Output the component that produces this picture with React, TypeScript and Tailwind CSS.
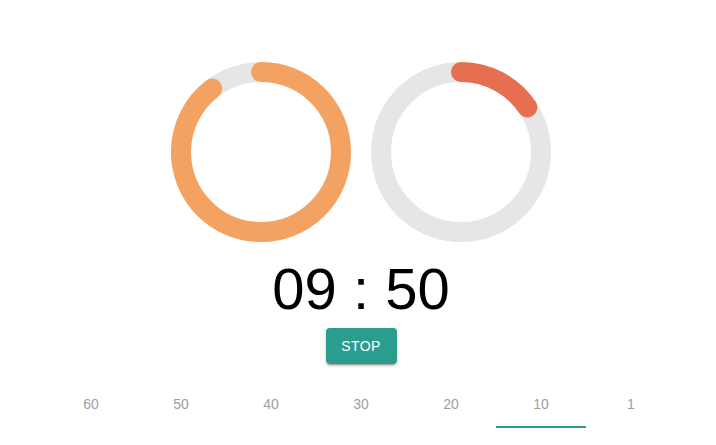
const R = 80;
const C = 2 * Math.PI * R;

const Ring = ({ degrees, color }: { degrees: number; color: string }) => {
  const len = (degrees / 360) * C;
  return (
    <svg width="180" height="180" viewBox="0 0 180 180" className="block">
      <circle cx="90" cy="90" r={R} fill="none" stroke="#e6e6e6" strokeWidth="20" />
      <circle
        cx="90"
        cy="90"
        r={R}
        fill="none"
        stroke={color}
        strokeWidth="20"
        strokeLinecap="round"
        strokeDasharray={`${len} ${C}`}
        transform="rotate(-90 90 90)"
      />
    </svg>
  );
};

const tabs = ["60", "50", "40", "30", "20", "10", "1"];

const App = () => {
  return (
    <div className="min-h-[445px] w-full bg-white pl-[6px] font-['Liberation_Sans',Arial,sans-serif]">
      <div className="flex flex-col items-center pt-[62px]">
        <div className="flex gap-[20px]">
          <Ring degrees={322} color="#f4a261" />
          <Ring degrees={56} color="#e76f51" />
        </div>

        <div className="mt-[18px] h-[58px] text-[58px] leading-none text-black whitespace-pre">
          09 : 50
        </div>

        <button className="mt-[10px] h-[36px] w-[71px] rounded-[4px] bg-[#2a9d8f] text-[14px] uppercase tracking-[0.4px] text-white shadow-[0px_3px_1px_-2px_rgba(0,0,0,0.2),0px_2px_2px_0px_rgba(0,0,0,0.14),0px_1px_5px_0px_rgba(0,0,0,0.12)]">
          Stop
        </button>

        <div className="mt-[16px] flex">
          {tabs.map((t) => (
            <div
              key={t}
              className="relative flex h-[48px] w-[90px] items-center justify-center text-[14px] text-[#9e9e9e]"
            >
              {t}
              {t === "10" && (
                <span className="absolute bottom-0 left-0 h-[2px] w-full bg-[#2a9d8f]" />
              )}
            </div>
          ))}
        </div>
      </div>
    </div>
  );
};

export default App;
